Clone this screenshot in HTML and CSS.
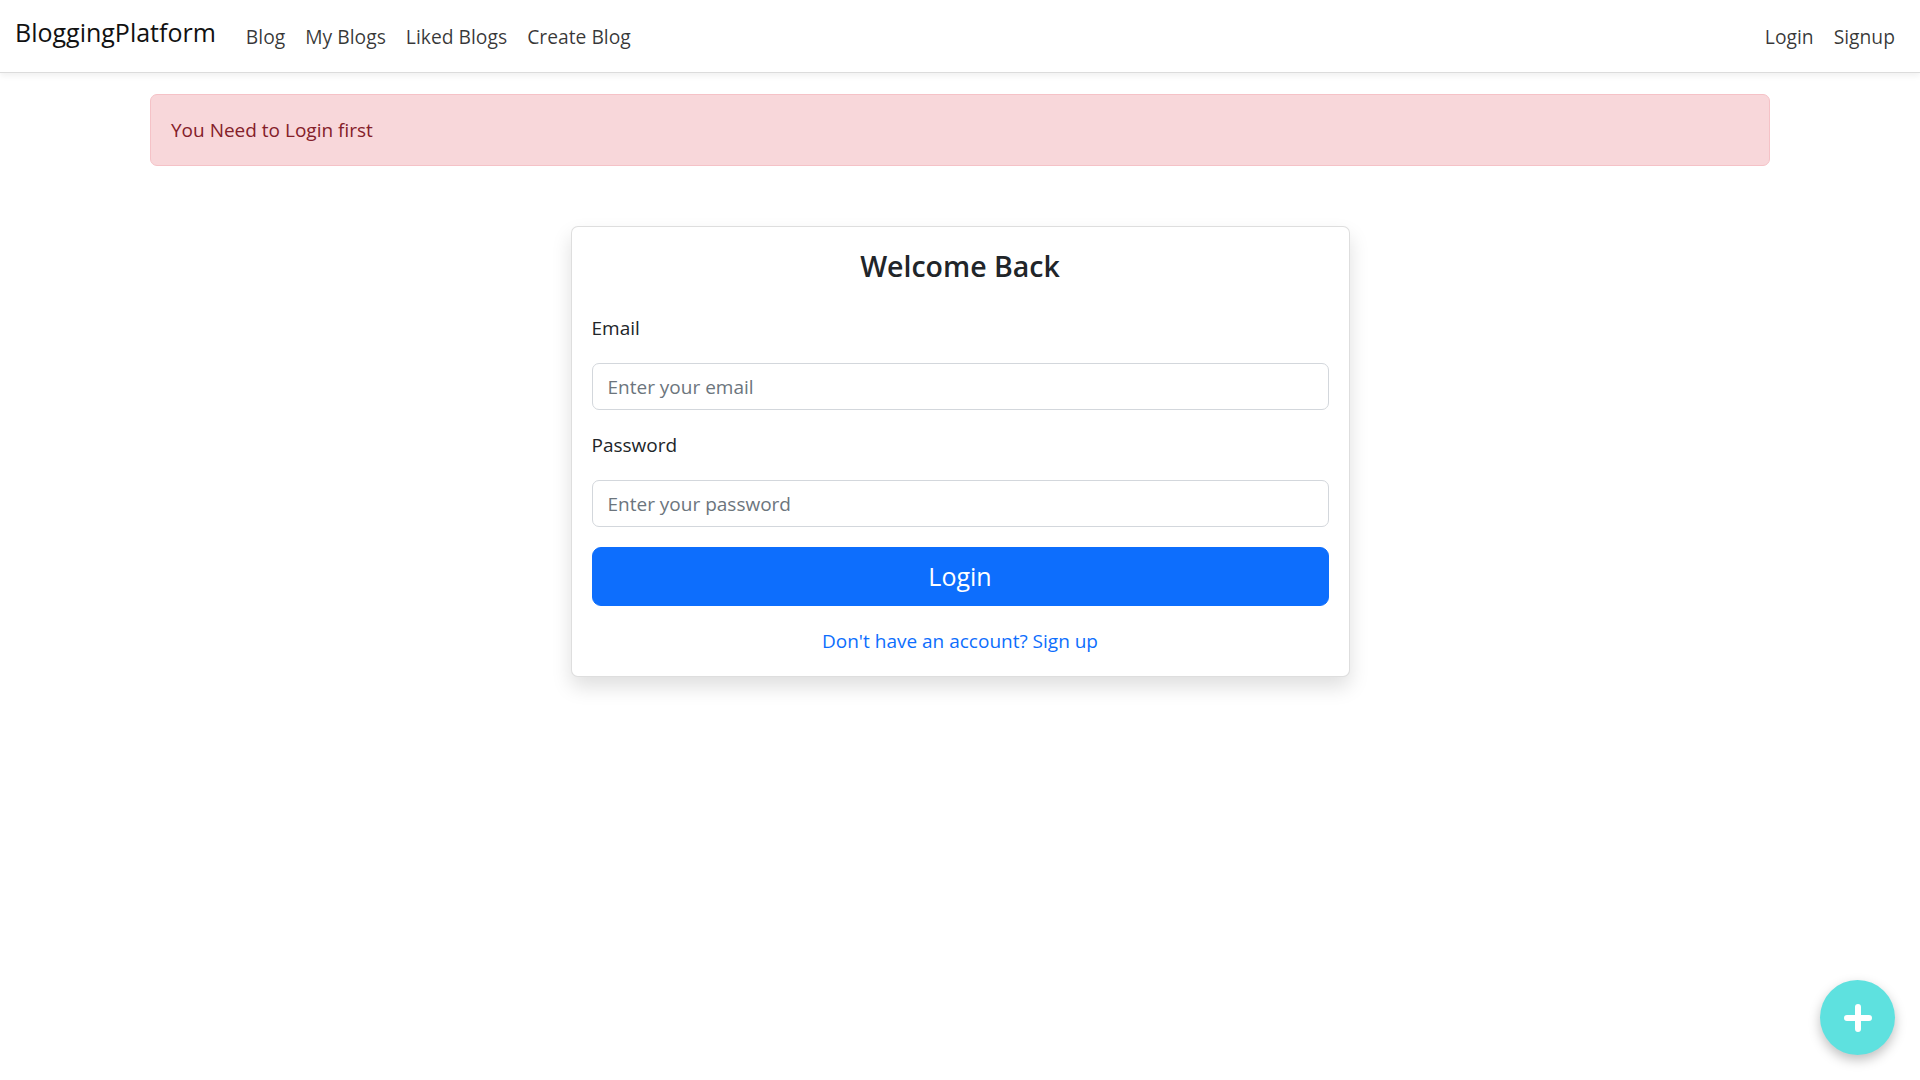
FILE: index.html
```html
<!DOCTYPE html>
<html lang="en">
<head>
<meta charset="utf-8">
<title>BloggingPlatform</title>
<link rel="stylesheet" href="styles.css">
</head>
<body>
<nav class="navbar">
  <div class="nav-left">
    <a class="brand" href="#">BloggingPlatform</a>
    <ul class="nav-list">
      <li><a class="nav-link" href="#">Blog</a></li>
      <li><a class="nav-link" href="#">My Blogs</a></li>
      <li><a class="nav-link" href="#">Liked Blogs</a></li>
      <li><a class="nav-link" href="#">Create Blog</a></li>
    </ul>
  </div>
  <ul class="nav-list">
    <li><a class="nav-link" href="#">Login</a></li>
    <li><a class="nav-link" href="#">Signup</a></li>
  </ul>
</nav>

<main class="container">
  <div class="alert">You Need to Login first</div>

  <div class="card-wrap">
    <div class="card">
      <h3 class="card-title">Welcome Back</h3>
      <form class="form">
        <div class="field">
          <label class="form-label" for="email">Email</label>
          <input class="form-control" id="email" type="email" placeholder="Enter your email">
        </div>
        <div class="field">
          <label class="form-label" for="password">Password</label>
          <input class="form-control" id="password" type="password" placeholder="Enter your password">
        </div>
        <button class="btn-primary" type="button">Login</button>
      </form>
      <p class="switch"><a href="#">Don't have an account? Sign up</a></p>
    </div>
  </div>
</main>

<button class="fab" type="button" aria-label="Create">
  <svg width="30" height="30" viewBox="0 0 30 30" aria-hidden="true">
    <path d="M15 4 V26 M4 15 H26" stroke="#fff" stroke-width="6" stroke-linecap="round" fill="none"/>
  </svg>
</button>
</body>
</html>
```

FILE: styles.css
```css
* { box-sizing: border-box; }

html, body {
  margin: 0;
  padding: 0;
  background: #fff;
}

body {
  font-family: "Segoe UI", "Open Sans", "Noto Sans", sans-serif;
  font-size: 20px;
  line-height: 1.5;
  color: #212529;
  min-height: 1080px;
}

a { text-decoration: none; }

.navbar {
  height: 73px;
  padding: 0 15px;
  display: flex;
  align-items: center;
  justify-content: space-between;
  background: #fff;
  border-bottom: 1px solid #dcdcdc;
  box-shadow: 0 3px 6px rgba(0, 0, 0, 0.06);
}

.nav-left {
  display: flex;
  align-items: center;
}

.brand {
  font-size: 25px;
  line-height: 37px;
  color: #111;
  margin-right: 20px;
  position: relative;
  top: -4px;
}

.nav-list {
  list-style: none;
  margin: 0;
  padding: 0;
  display: flex;
}

.nav-link {
  display: block;
  padding: 11px 10px 9px;
  font-size: 19.3px;
  line-height: 30px;
  color: rgba(0, 0, 0, 0.78);
}

.container {
  width: 1650px;
  margin: 0 auto;
  padding: 0 15px;
}

.alert {
  margin-top: 21px;
  padding: 20px;
  line-height: 30px;
  font-size: 19px;
  background: #f8d7da;
  border: 1px solid #f5c2c7;
  border-radius: 7px;
  color: #842029;
}

.card-wrap {
  display: flex;
  justify-content: center;
  margin-top: 60px;
}

.card {
  width: 779px;
  padding: 20px;
  background: #fff;
  border: 1px solid rgba(0, 0, 0, 0.13);
  border-radius: 7px;
  box-shadow: 0 10px 20px rgba(0, 0, 0, 0.13);
}

.card-title {
  margin: -2px 0 26px;
  text-align: center;
  font-size: 28.5px;
  font-weight: 600;
  line-height: 42px;
  color: #212529;
}

.form { margin: 0; }

.field { margin-bottom: 20px; }

.form-label {
  display: block;
  line-height: 30px;
  margin-bottom: 20px;
  font-size: 19px;
}

.form-control {
  display: block;
  width: 100%;
  height: 47px;
  padding: 7px 15px;
  font: inherit;
  font-size: 19px;
  line-height: 30px;
  color: #212529;
  background: #fff;
  border: 1px solid #d3d7dc;
  border-radius: 7px;
  outline: none;
}

.form-control::placeholder { color: #6c757d; }

.btn-primary {
  display: block;
  width: 100%;
  height: 59px;
  font: inherit;
  font-size: 25px;
  line-height: 37px;
  color: #fff;
  background: #0d6efd;
  border: 1px solid #0d6efd;
  border-radius: 9px;
  cursor: pointer;
}

.switch {
  margin: 20px 0 0;
  text-align: center;
  line-height: 30px;
  font-size: 19px;
}

.switch a { color: #0d6efd; }

.fab {
  position: fixed;
  right: 25px;
  bottom: 25px;
  width: 75px;
  height: 75px;
  border-radius: 50%;
  border: none;
  padding: 0;
  background: #5ee1df;
  box-shadow: 0 5px 12px rgba(0, 0, 0, 0.25);
  display: flex;
  align-items: center;
  justify-content: center;
  cursor: pointer;
}
```
